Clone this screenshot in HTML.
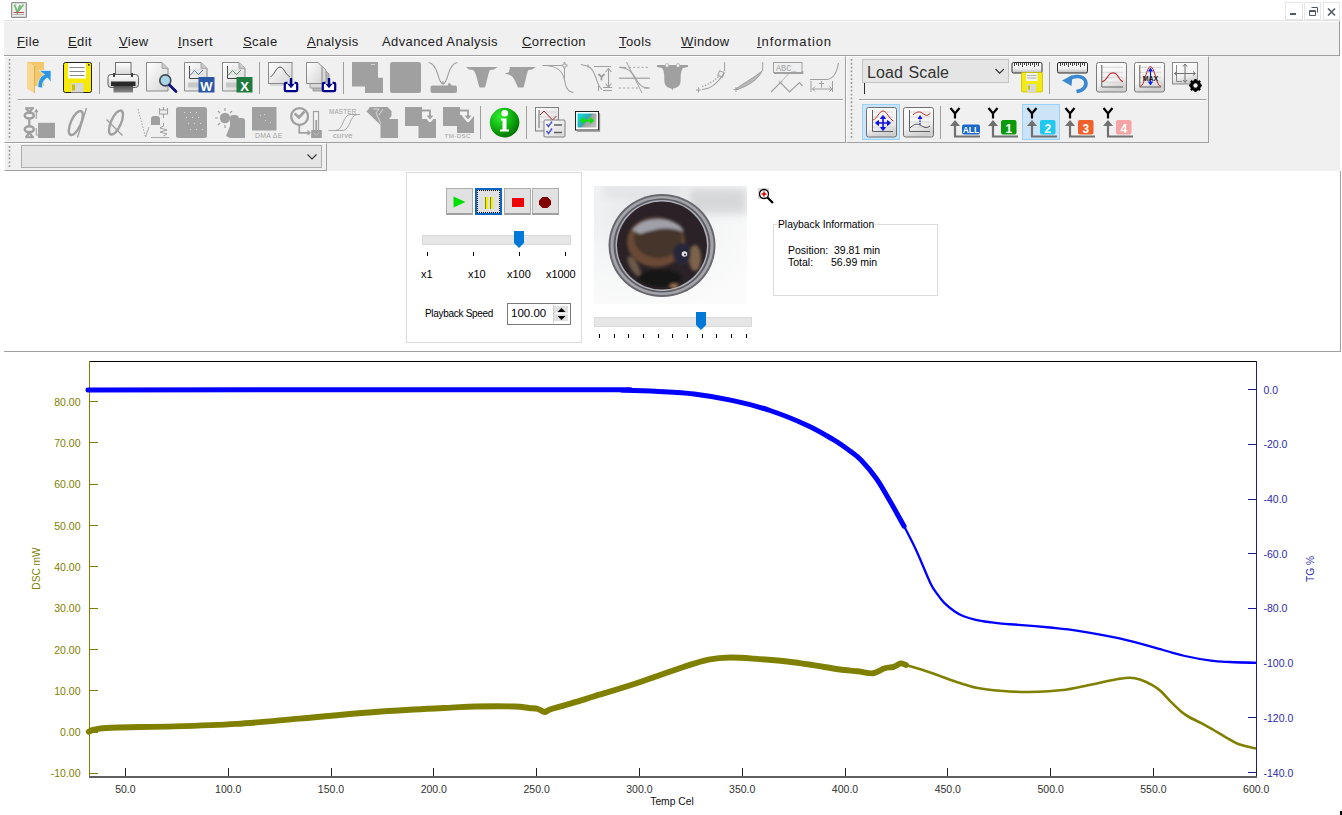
<!DOCTYPE html>
<html><head><meta charset="utf-8">
<style>
*{margin:0;padding:0;box-sizing:border-box}
html,body{width:1342px;height:815px;overflow:hidden;background:#fff;font-family:"Liberation Sans",sans-serif;color:#000}
.a{position:absolute}
.menu{position:absolute;top:34px;font-size:13px;letter-spacing:0.4px;color:#222;line-height:15px;white-space:nowrap}
.menu u{text-decoration:underline;text-underline-offset:1px}
svg{position:absolute;overflow:visible}
.t{position:absolute;white-space:nowrap;line-height:1}
</style></head><body>
<div class="a" style="left:0;top:0;width:1342px;height:815px">

<!-- title bar icon -->
<div class="a" style="left:11px;top:2px;width:16px;height:16px;border:1px solid #909090;background:#eef2ee;border-radius:1px;box-shadow:inset 0 0 0 1px #d8d8d8"></div>
<svg style="left:11px;top:2px" width="16" height="16"><path d="M3.5 2.5 L6.3 10.5 L9 3 M6.3 10.5 L12.5 2.5" stroke="#78b878" stroke-width="1.8" fill="none"/><path d="M2.5 10.5 H13" stroke="#c05050" stroke-width="1"/><path d="M2.5 12.5 H13" stroke="#a0a0a0" stroke-width="0.8"/></svg>
<!-- window buttons -->
<div class="a" style="left:1285px;top:2px;width:18px;height:18px;border:1px solid #e6e6e6"></div>
<div class="a" style="left:1304px;top:2px;width:17px;height:18px;border:1px solid #e6e6e6"></div>
<div class="a" style="left:1323px;top:2px;width:17px;height:18px;border:1px solid #e6e6e6"></div>
<div class="a" style="left:1290px;top:13px;width:6px;height:2px;background:#505a64"></div>
<svg style="left:1309px;top:7px" width="9" height="9"><path d="M2.5 0.5 H8.5 V5.5 M0.5 3.5 H6.5 V8.5 H0.5 Z M0.5 4.5 H6.5" stroke="#505a64" stroke-width="1" fill="none"/></svg>
<svg style="left:1327px;top:8px" width="9" height="8"><path d="M1 0.5 L8 7.5 M8 0.5 L1 7.5" stroke="#505a64" stroke-width="1.6"/></svg>

<!-- menu bar -->
<div class="a" style="left:4px;top:20px;width:1336px;height:36px;background:#f0f0f0;border-top:1px solid #e2e2e2"></div>
<div class="a" style="left:4px;top:21px;width:1336px;height:1px;background:#fafafa"></div>
<div class="a" style="left:4px;top:55px;width:1336px;height:1px;background:#a0a0a0"></div>
<div class="a" style="left:1339px;top:21px;width:1px;height:35px;background:#9a9a9a"></div>
<div class="menu" style="left:17px"><u>F</u>ile</div>
<div class="menu" style="left:68px"><u>E</u>dit</div>
<div class="menu" style="left:119px"><u>V</u>iew</div>
<div class="menu" style="left:178px"><u>I</u>nsert</div>
<div class="menu" style="left:243px"><u>S</u>cale</div>
<div class="menu" style="left:307px"><u>A</u>nalysis</div>
<div class="menu" style="left:382px">Advanced Analysis</div>
<div class="menu" style="left:522px"><u>C</u>orrection</div>
<div class="menu" style="left:619px"><u>T</u>ools</div>
<div class="menu" style="left:681px"><u>W</u>indow</div>
<div class="menu" style="left:757px;letter-spacing:0.9px"><u>I</u>nformation</div>

<!-- toolbar area -->
<div class="a" style="left:4px;top:56px;width:1336px;height:115px;background:#f0f0f0"></div>
<!-- toolbar 1 -->
<div class="a" style="left:4px;top:56px;width:842px;height:87px;border-left:1px solid #fff;border-top:1px solid #fff;border-bottom:1px solid #a0a0a0;border-right:1px solid #a0a0a0"></div>
<div class="a" style="left:18px;top:99px;width:825px;height:1px;background:#a0a0a0"></div>
<div class="a" style="left:18px;top:100px;width:825px;height:1px;background:#fff"></div>
<!-- toolbar 2 -->
<div class="a" style="left:846px;top:56px;width:363px;height:87px;border-left:1px solid #fff;border-top:1px solid #fff;border-bottom:1px solid #a0a0a0;border-right:1px solid #a0a0a0"></div>
<div class="a" style="left:859px;top:99px;width:347px;height:1px;background:#a0a0a0"></div>
<div class="a" style="left:859px;top:100px;width:347px;height:1px;background:#fff"></div>
<!-- toolbar bottom line full -->
<!-- combo toolbar -->
<div class="a" style="left:4px;top:143px;width:323px;height:28px;border-left:1px solid #fff;border-top:1px solid #fff;border-bottom:1px solid #a0a0a0;border-right:1px solid #a0a0a0"></div>
<div class="a" style="left:21px;top:145px;width:301px;height:23px;background:#e5e5e5;border:1px solid #adadad"></div>
<svg style="left:307px;top:153.5px" width="10" height="6"><path d="M0.5 0.5 L5 5 L9.5 0.5" stroke="#333" stroke-width="1.1" fill="none"/></svg>

<!-- grips -->
<div id="grips"></div>

<!-- playback panel -->
<div class="a" style="left:4px;top:171px;width:1337px;height:181px;background:#fff;border-right:1px solid #a0a0a0;border-bottom:1px solid #a0a0a0"></div>

<!-- playback group -->
<div class="a" style="left:406px;top:172px;width:176px;height:171px;border:1px solid #dcdcdc"></div>
<!-- buttons -->
<div class="a" style="left:446px;top:188px;width:27px;height:27px;background:#e1e1e1;border:1px solid #adadad;border-bottom:2px solid #a0a0a0"></div>
<svg style="left:453px;top:196px" width="13" height="12"><path d="M0.5 0.5 L12.5 6 L0.5 11.5 Z" fill="#00e000"/></svg>
<div class="a" style="left:475px;top:188px;width:27px;height:27px;background:#e1e1e1;border:2px solid #0a64c0"></div>
<div class="a" style="left:477px;top:190px;width:23px;height:23px;border:1px dotted #101010"></div>
<div class="a" style="left:485px;top:197px;width:3px;height:12px;background:#f2f200;border-left:1px solid #8a8a00"></div>
<div class="a" style="left:490px;top:197px;width:3px;height:12px;background:#f2f200;border-left:1px solid #8a8a00"></div>
<div class="a" style="left:504px;top:188px;width:27px;height:27px;background:#e1e1e1;border:1px solid #adadad;border-bottom:2px solid #a0a0a0"></div>
<div class="a" style="left:512px;top:198px;width:12px;height:9px;background:#f00000"></div>
<div class="a" style="left:532px;top:188px;width:27px;height:27px;background:#e1e1e1;border:1px solid #adadad;border-bottom:2px solid #a0a0a0"></div>
<svg style="left:539px;top:197px" width="12" height="11"><path d="M3.5 0 H8.5 L12 3.5 V7.5 L8.5 11 H3.5 L0 7.5 V3.5 Z" fill="#800000"/></svg>
<!-- slider 1 -->
<div class="a" style="left:422px;top:235px;width:149px;height:10px;background:#e6e6e6;border:1px solid #dadada"></div>
<svg style="left:514px;top:231px" width="11" height="17"><path d="M0 0 H10 V12 L5 17 L0 12 Z" fill="#0078d7"/></svg>
<div class="a" style="left:427px;top:252px;width:1px;height:4px;background:#000"></div>
<div class="a" style="left:473px;top:252px;width:1px;height:4px;background:#000"></div>
<div class="a" style="left:519px;top:252px;width:1px;height:4px;background:#000"></div>
<div class="a" style="left:565px;top:252px;width:1px;height:4px;background:#000"></div>
<div class="t" style="left:421px;top:269px;font-size:11px;color:#000">x1</div>
<div class="t" style="left:468px;top:269px;font-size:11px;color:#000">x10</div>
<div class="t" style="left:507px;top:269px;font-size:11px;color:#000">x100</div>
<div class="t" style="left:546px;top:269px;font-size:11px;color:#000;letter-spacing:-0.1px">x1000</div>
<div class="t" style="left:425px;top:309px;font-size:10px;color:#000;letter-spacing:-0.3px">Playback Speed</div>
<!-- spin -->
<div class="a" style="left:507px;top:303px;width:64px;height:22px;background:#fff;border:1px solid #7a7a7a"></div>
<div class="t" style="left:511px;top:308px;font-size:11.5px;color:#000">100.00</div>
<div class="a" style="left:553px;top:305px;width:1px;height:18px;background:#d0d0d0"></div>
<div class="a" style="left:554px;top:306px;width:14px;height:7px;background:#e1e1e1"></div>
<div class="a" style="left:554px;top:314px;width:14px;height:7px;background:#e1e1e1"></div>
<svg style="left:557px;top:307px" width="9" height="14"><path d="M0.5 5 L4.5 1 L8.5 5 Z M0.5 9 L4.5 13 L8.5 9 Z" fill="#000"/></svg>

<!-- video image -->
<svg style="left:594px;top:186px;overflow:hidden" width="153" height="118">
<defs>
<filter id="bl" x="-0.2" y="-0.2" width="1.4" height="1.4"><feGaussianBlur stdDeviation="1.6"/></filter>
<filter id="bl2" x="-0.2" y="-0.2" width="1.4" height="1.4"><feGaussianBlur stdDeviation="0.7"/></filter>
<filter id="bl3" x="-0.5" y="-0.5" width="2" height="2"><feGaussianBlur stdDeviation="4"/></filter>
<radialGradient id="rgb" cx="0.3" cy="0.2" r="0.9"><stop offset="0" stop-color="#e6e8ea"/><stop offset="0.5" stop-color="#f4f5f6"/><stop offset="1" stop-color="#fbfbfb"/></radialGradient>
</defs>
<rect x="0" y="0" width="153" height="118" fill="url(#rgb)"/>
<rect x="95" y="2" width="58" height="26" fill="#cfd0d2" filter="url(#bl3)" opacity="0.8"/>
<rect x="10" y="0" width="80" height="12" fill="#dfe0e2" filter="url(#bl3)" opacity="0.7"/>
<g filter="url(#bl2)">
<ellipse cx="68" cy="59.5" rx="53.5" ry="51.5" fill="#68686e"/>
<ellipse cx="68" cy="59.5" rx="51.5" ry="49.5" fill="#a4a4aa"/>
<ellipse cx="68" cy="59.5" rx="48.5" ry="47" fill="#5a5a62"/>
<ellipse cx="68" cy="59.5" rx="46.5" ry="45.5" fill="#b0b0ba"/>
<ellipse cx="68" cy="59.5" rx="45" ry="44" fill="#2c2428"/>
</g>
<g filter="url(#bl)">
<ellipse cx="62" cy="56" rx="29" ry="25" fill="#6a4a34"/>
<ellipse cx="64" cy="52" rx="24" ry="20" fill="#44342c"/>
<path d="M38 44 Q50 30 74 34 Q88 38 90 46 Q72 38 46 48 Z" fill="#a0a0a8"/>
<ellipse cx="101" cy="72" rx="6" ry="13" fill="#9a7858" opacity="0.75"/>
<ellipse cx="40" cy="80" rx="4" ry="11" fill="#9a8060" opacity="0.6" transform="rotate(-30 40 80)"/>
<ellipse cx="66" cy="92" rx="22" ry="9" fill="#141216"/>
<ellipse cx="80" cy="100" rx="4" ry="2.5" fill="#c09060" opacity="0.7"/>
<ellipse cx="88" cy="68" rx="9" ry="11" fill="#28283a"/>
</g>
<circle cx="90.5" cy="68" r="2.8" fill="#e0e0e0" filter="url(#bl2)"/>
<circle cx="91" cy="68.5" r="1.1" fill="#404040"/>
</svg>
<!-- zoom icon -->
<div class="a" style="left:758px;top:188px;width:11px;height:11px;background:#d8d8d8"></div>
<svg style="left:758px;top:188px" width="16" height="16"><circle cx="6" cy="6" r="4.5" fill="#fff" stroke="#000" stroke-width="1.3"/><path d="M3.5 6 H8.5 M6 3.5 V8.5" stroke="#e00000" stroke-width="1.6"/><path d="M9.5 9.5 L15 15" stroke="#000" stroke-width="2.2"/></svg>
<!-- slider 2 -->
<div class="a" style="left:594px;top:317px;width:158px;height:10px;background:#e6e6e6;border:1px solid #dadada"></div>
<svg style="left:696px;top:312px" width="11" height="18"><path d="M0 0 H10 V13 L5 18 L0 13 Z" fill="#0078d7"/></svg>
<div class="a" style="left:599px;top:334px;width:1px;height:4px;background:#000"></div>
<div class="a" style="left:614px;top:334px;width:1px;height:4px;background:#000"></div>
<div class="a" style="left:628px;top:334px;width:1px;height:4px;background:#000"></div>
<div class="a" style="left:643px;top:334px;width:1px;height:4px;background:#000"></div>
<div class="a" style="left:658px;top:334px;width:1px;height:4px;background:#000"></div>
<div class="a" style="left:672px;top:334px;width:1px;height:4px;background:#000"></div>
<div class="a" style="left:687px;top:334px;width:1px;height:4px;background:#000"></div>
<div class="a" style="left:702px;top:334px;width:1px;height:4px;background:#000"></div>
<div class="a" style="left:716px;top:334px;width:1px;height:4px;background:#000"></div>
<div class="a" style="left:731px;top:334px;width:1px;height:4px;background:#000"></div>
<div class="a" style="left:746px;top:334px;width:1px;height:4px;background:#000"></div>
<!-- info group -->
<div class="a" style="left:773px;top:224px;width:165px;height:72px;border:1px solid #dcdcdc"></div>
<div class="t" style="left:777px;top:220px;font-size:10.3px;color:#000;background:#fff;padding:0 1px">Playback Information</div>
<div class="t" style="left:788px;top:245px;font-size:10.5px;color:#000">Position:</div>
<div class="t" style="left:834px;top:245px;font-size:10.5px;color:#000">39.81 min</div>
<div class="t" style="left:788px;top:256.5px;font-size:10.5px;color:#000">Total:</div>
<div class="t" style="left:831px;top:256.5px;font-size:10.5px;color:#000">56.99 min</div>

<svg style="left:0;top:0" width="1342" height="172">
<defs>
<linearGradient id="gw" x1="0" y1="0" x2="1" y2="1"><stop offset="0" stop-color="#ffffff"/><stop offset="1" stop-color="#d6d6d6"/></linearGradient>
<linearGradient id="gv" x1="0" y1="0" x2="0" y2="1"><stop offset="0" stop-color="#ffffff"/><stop offset="1" stop-color="#d0d0d0"/></linearGradient>
<linearGradient id="gdark" x1="0" y1="0" x2="0" y2="1"><stop offset="0" stop-color="#505050"/><stop offset="1" stop-color="#8a8a8a"/></linearGradient>
</defs>
<!-- grips -->
<path d="M9.5 59 V140" stroke="#9a9a9a" stroke-width="1.6" stroke-dasharray="1.8 2.05"/>
<path d="M851.5 59 V140" stroke="#9a9a9a" stroke-width="1.6" stroke-dasharray="1.8 2.05"/>
<path d="M9.5 146 V168" stroke="#9a9a9a" stroke-width="1.6" stroke-dasharray="1.8 2.05"/>
<!-- separators row1 -->
<path d="M99.5 62 V94 M259.5 62 V94 M343.5 62 V94 M1049.5 62 V94" stroke="#a0a0a0" stroke-width="1"/>
<!-- row2 separators -->
<path d="M480.5 106 V139 M526.5 106 V139 M940.5 106 V139" stroke="#a0a0a0" stroke-width="1"/>

<!-- folder -->
<path d="M27 62 H44 V86 H27 Z" fill="#f2c86a"/>
<path d="M27 62 L34.5 66 V93 L27 89 Z" fill="#f8d890"/>
<path d="M34.5 66 V93" stroke="#d8a850" stroke-width="0.8"/>
<path d="M38 87.5 C37.5 81 40 76.5 44.5 74.5 L39 70.5 H51 V82 L47.5 78 C43.5 80 42 83 42.5 88 Z" fill="#2e96e2" stroke="#eaf6ff" stroke-width="0.7"/>
<!-- save -->
<rect x="63.5" y="62.5" width="28" height="30" rx="2" fill="#f6ea00" stroke="#202020" stroke-width="1"/>
<rect x="68" y="63" width="18" height="15.5" fill="#ffffff"/>
<path d="M69.5 67.5 H84.5 M69.5 71.5 H84.5 M69.5 75.5 H84.5" stroke="#7a7a7a" stroke-width="0.9"/>
<rect x="71" y="83" width="12.5" height="9.5" fill="#d8d8d8"/>
<rect x="72" y="84.5" width="3" height="6" fill="#c8c000"/>
<rect x="88" y="64" width="1.6" height="1.6" fill="#202020"/>
<!-- printer -->
<rect x="115.5" y="62.5" width="15.5" height="14" fill="url(#gv)" stroke="#707070" stroke-width="1"/>
<rect x="108" y="74.5" width="30.5" height="13" rx="3" fill="url(#gv)" stroke="#606060" stroke-width="1"/>
<rect x="111" y="81.5" width="24.5" height="4.5" fill="#2a2a2a"/>
<rect x="113.5" y="86" width="19.5" height="6.5" fill="url(#gdark)"/>
<path d="M114 73 V77 M132 73 V77" stroke="#404040" stroke-width="2"/>
<!-- page + magnifier -->
<path d="M146.5 62.5 H162 L168 68.5 V91 H146.5 Z" fill="url(#gw)" stroke="#8a8a8a" stroke-width="1"/>
<path d="M162 62.5 V68.5 H168" fill="#c8c8c8" stroke="#9a9a9a" stroke-width="0.8"/>
<circle cx="165.3" cy="80.4" r="5.5" fill="#a8d4e8" stroke="#404850" stroke-width="1.6"/>
<path d="M169.5 85 L176 91.5" stroke="#10107a" stroke-width="2.8" stroke-linecap="round"/>
<!-- word -->
<path d="M184.5 62.5 H201 L207 68.5 V91 H184.5 Z" fill="url(#gw)" stroke="#8a8a8a" stroke-width="1"/>
<path d="M201 62.5 V68.5 H207" fill="#c8c8c8" stroke="#9a9a9a" stroke-width="0.8"/>
<path d="M189.5 66 V78.5 H203" stroke="#303030" stroke-width="0.9" fill="none"/>
<path d="M189.5 70 H203 M189.5 74 H203" stroke="#d0d0d0" stroke-width="0.7"/>
<path d="M190 75.5 L194.5 70.5 L198.5 74.5 L203 70" stroke="#5a78a8" stroke-width="1" fill="none"/>
<rect x="188" y="82.5" width="11" height="5" fill="#c8c8c8"/>
<rect x="198.5" y="77" width="16" height="15.5" fill="#2b58a6"/>
<text x="206.5" y="90.5" text-anchor="middle" font-size="13" font-weight="bold" fill="#fff" font-family="Liberation Sans">W</text>
<!-- excel -->
<path d="M222.5 62.5 H239 L245 68.5 V91 H222.5 Z" fill="url(#gw)" stroke="#8a8a8a" stroke-width="1"/>
<path d="M239 62.5 V68.5 H245" fill="#c8c8c8" stroke="#9a9a9a" stroke-width="0.8"/>
<path d="M227.5 66 V78.5 H241" stroke="#303030" stroke-width="0.9" fill="none"/>
<path d="M227.5 70 H241 M227.5 74 H241" stroke="#d0d0d0" stroke-width="0.7"/>
<path d="M228 75.5 L232.5 70.5 L236.5 74.5 L241 70" stroke="#5a8a6a" stroke-width="1" fill="none"/>
<rect x="226" y="82.5" width="11" height="5" fill="#c8c8c8"/>
<rect x="236.5" y="77" width="16" height="15.5" fill="#1f7a3e"/>
<text x="244.5" y="90.5" text-anchor="middle" font-size="13" font-weight="bold" fill="#fff" font-family="Liberation Sans">X</text>
<!-- curve import -->
<rect x="268.5" y="62.5" width="23.5" height="21" fill="url(#gw)" stroke="#8a8a8a" stroke-width="1"/>
<path d="M292.5 64 V85 H270" stroke="#c0c0c0" stroke-width="1.2" fill="none"/>
<path d="M270.5 76.5 C274 76 276 67 280 67 C284 67 286 76 290 76.5" stroke="#404040" stroke-width="0.9" fill="none"/>
<path d="M287.5 82.8 H286 Q284.8 82.8 284.8 84 V90 Q284.8 91.2 286 91.2 H296 Q297.2 91.2 297.2 90 V84 Q297.2 82.8 296 82.8 H294.5" stroke="#00008a" stroke-width="2.2" fill="#fff"/>
<path d="M291 78 V85" stroke="#00008a" stroke-width="2.4"/><path d="M287.3 83.8 H294.7 L291 88.3 Z" fill="#00008a"/>
<!-- multi page import -->
<path d="M313 70 H325 L329 74 V91 H313 Z" fill="#b8b8b8" stroke="#909090" stroke-width="0.8"/>
<path d="M310 66 H322 L326 70 V88 H310 Z" fill="#d8d8d8" stroke="#909090" stroke-width="0.8"/>
<path d="M306.5 62.5 H318 L322 66.5 V83.5 H306.5 Z" fill="url(#gw)" stroke="#8a8a8a" stroke-width="1"/>
<path d="M325.5 82.8 H324 Q322.8 82.8 322.8 84 V90 Q322.8 91.2 324 91.2 H334 Q335.2 91.2 335.2 90 V84 Q335.2 82.8 334 82.8 H332.5" stroke="#00008a" stroke-width="2.2" fill="#fff"/>
<path d="M329 78 V85" stroke="#00008a" stroke-width="2.4"/><path d="M325.3 83.8 H332.7 L329 88.3 Z" fill="#00008a"/>

<!-- gray L -->
<path d="M352 62 H378 V77.7 H383 V93 H365 V86.6 H352 Z" fill="#a0a0a0"/>
<path d="M371 64.5 H375" stroke="#e0e0e0" stroke-width="0.8"/>
<!-- gray square -->
<rect x="390" y="62" width="31" height="31" rx="2.5" fill="#a0a0a0"/>
<!-- V base -->
<path d="M428.5 62.5 C433 63 436 68 438 75 C440 82 441.5 84 443 84 C444.5 84 446 82 448 75 C450 68 453 63 457.5 62.5" stroke="#a0a0a0" stroke-width="1.1" fill="none"/>
<path d="M443 81 V85 M441 83 H445" stroke="#a0a0a0" stroke-width="0.9"/>
<path d="M432.5 85.5 H447.5 L449 82.5 L452 85.5 H455 Q457 85.5 457 87.5 V91 Q457 93 455 93 H432.5 Q430.5 93 430.5 91 V87.5 Q430.5 85.5 432.5 85.5 Z" fill="#a0a0a0"/>
<!-- filled V -->
<path d="M466 67 H497.5 L494 69.5 L490 70 C488 73 487.5 80 485 87.5 H479.5 C477 80 476.5 73 473 70 L469 69.5 Z" fill="#a0a0a0"/>
<!-- skewed V -->
<path d="M510 67 H536 L532 69.5 L528.5 70 C526.5 73 526 80 523.5 87.5 H518 C515.5 82 514 77 510 75 L504.5 73.6 L509 72.2 Z" fill="#a0a0a0"/>
<!-- curve cross -->
<path d="M542.5 65.5 H561.5" stroke="#a0a0a0" stroke-width="1"/>
<path d="M548 65.8 C557 66.5 563 72 564.5 80 C565.5 86 567 92 573.5 92.5" stroke="#a0a0a0" stroke-width="1.1" fill="none"/>
<path d="M564.5 62 V80" stroke="#a0a0a0" stroke-width="1"/>
<path d="M561.5 65.5 H567.5 M564.5 62.5 V68.5" stroke="#a0a0a0" stroke-width="2.2"/>
<path d="M562.5 65.5 H566.5 M564.5 63.5 V67.5" stroke="#f0f0f0" stroke-width="0.7"/>
<!-- Y step -->
<path d="M581 64.5 L588 66.3 C592 68 594 72 596 78 C597.5 83 598.5 87 602 89.5" stroke="#a0a0a0" stroke-width="1.1" fill="none"/>
<path d="M594 66.5 H611 M603 87.5 H612 M603 90.5 H612 M588 64.5 V67.5 M598.5 86 V91" stroke="#a0a0a0" stroke-width="1"/>
<path d="M608.5 69 V86.5" stroke="#a0a0a0" stroke-width="1.1"/>
<path d="M605.5 72 L608.5 68.5 L611.5 72 M605.5 83.5 L608.5 87 L611.5 83.5" stroke="#a0a0a0" stroke-width="1.1" fill="none"/>
<path d="M598.5 74 L601.5 77 L604.5 74 M601.5 77 V80.5" stroke="#a0a0a0" stroke-width="1.8" fill="none"/>
<!-- crossing lines -->
<path d="M619 67.4 H626" stroke="#a0a0a0" stroke-width="1"/>
<path d="M629 67.4 H650" stroke="#a0a0a0" stroke-width="1" stroke-dasharray="2 2.2"/>
<path d="M619 78.2 H650" stroke="#a0a0a0" stroke-width="1.2"/>
<path d="M619 88 H640" stroke="#a0a0a0" stroke-width="1" stroke-dasharray="2 2.2"/>
<path d="M644 88 H650" stroke="#a0a0a0" stroke-width="1.2"/>
<path d="M619.5 67.4 C628 67.5 632 72 636 79 C640 86 643 88 648 88" stroke="#a0a0a0" stroke-width="1.1" fill="none"/>
<path d="M626.5 62 L642 93" stroke="#a0a0a0" stroke-width="1"/>
<!-- U dots -->
<path d="M657 65 H688 V67 L683 68 C680 72 681 78 680.5 82 C680 86 677 88 673 88.5 L672.5 91 L671.5 88.5 C667.5 88 665 86 664.5 82 C664 78 665 72 662 68 L657 67 Z" fill="#a0a0a0"/>
<circle cx="667" cy="65.5" r="1.8" fill="#f8f8f8" stroke="#a0a0a0" stroke-width="0.8"/>
<circle cx="678" cy="65.5" r="1.8" fill="#f8f8f8" stroke="#a0a0a0" stroke-width="0.8"/>
<!-- dotted curve -->
<path d="M724.6 62 V71" stroke="#a0a0a0" stroke-width="1"/>
<path d="M702 89.5 C711 89 718 83 724 73" stroke="#a0a0a0" stroke-width="1.1" fill="none"/>
<path d="M702 86.5 C709 84.5 715 80 720 75" stroke="#a0a0a0" stroke-width="1.3" fill="none" stroke-dasharray="1.3 1.7"/>
<path d="M696 90 H701 M698.5 87.5 V92.5" stroke="#a0a0a0" stroke-width="1"/>
<rect x="718.5" y="71.5" width="5" height="5" fill="none" stroke="#a0a0a0" stroke-width="1" transform="rotate(20 721 74)"/>
<!-- double curve -->
<path d="M762.7 62 V71" stroke="#a0a0a0" stroke-width="1"/>
<path d="M735 89.5 C745 82 754 78 762 71 C758 80 748 86 737 89.5 Z" fill="#b8b8b8" stroke="#a0a0a0" stroke-width="1"/>
<path d="M733.5 89.5 H738.5 M736 87 V92" stroke="#a0a0a0" stroke-width="1"/>
<!-- ABC zigzag -->
<rect x="773.5" y="62.5" width="28.5" height="10" fill="#f0f0f0" stroke="#a0a0a0" stroke-width="1"/>
<path d="M774 73.3 H802.5 V71" stroke="#a0a0a0" stroke-width="1.5" fill="none"/>
<text x="776" y="71" font-size="8.5" fill="#a0a0a0" font-family="Liberation Mono">ABC_</text>
<path d="M789 73.5 L779.5 83" stroke="#a0a0a0" stroke-width="0.8"/>
<path d="M771 92 L780.5 82.5 L789.5 92 L799.5 82.5 L802.5 86" stroke="#a0a0a0" stroke-width="1.2" fill="none"/>
<path d="M778.5 81 L782.5 84.5 M782.5 81 L778.5 84.5" stroke="#a0a0a0" stroke-width="0.8"/>
<!-- curve t -->
<path d="M810 79.5 H827 C833 79 837 72 838.5 63" stroke="#a0a0a0" stroke-width="1.1" fill="none"/>
<path d="M811 81 V92 M832.5 81 V92" stroke="#a0a0a0" stroke-width="1"/>
<path d="M812 89 H832 M815 86.5 L812.5 89 L815 91.5 M829.5 86.5 L832 89 L829.5 91.5" stroke="#a0a0a0" stroke-width="1" fill="none"/>
<path d="M821.5 81 V87.5 M819 83.5 H824" stroke="#a0a0a0" stroke-width="1"/>
</svg>

<svg style="left:0;top:0" width="1342" height="172">
<defs>
<radialGradient id="ginfo" cx="0.35" cy="0.3" r="0.75"><stop offset="0" stop-color="#30f030"/><stop offset="0.55" stop-color="#10b010"/><stop offset="1" stop-color="#007000"/></radialGradient>
<linearGradient id="gscr" x1="0" y1="0.2" x2="1" y2="0.8"><stop offset="0" stop-color="#10d8e0"/><stop offset="0.45" stop-color="#30a8b0"/><stop offset="0.55" stop-color="#a0a0a0"/><stop offset="1" stop-color="#c0c0c0"/></linearGradient>
<linearGradient id="gw2" x1="0" y1="0" x2="1" y2="1"><stop offset="0" stop-color="#ffffff"/><stop offset="1" stop-color="#d6d6d6"/></linearGradient>
</defs>
<!-- icon1 DNA + square -->
<g fill="none" stroke="#a0a0a0">
<ellipse cx="29.3" cy="115.5" rx="4.5" ry="3" stroke-width="2.6"/>
<ellipse cx="29.3" cy="129.2" rx="4.5" ry="3" stroke-width="2.6"/>
<path d="M29.3 118.5 V126.5" stroke-width="2.2"/>
<path d="M26 108 L29.3 112.5 L32.8 108 M29.3 112 V113" stroke-width="2.4"/>
<path d="M26 137.5 L29.3 132.5 L32.8 137.5" stroke-width="2.4"/>
<path d="M25.3 108.2 H34" stroke-width="2"/>
<path d="M25.3 137.2 H34" stroke-width="2"/>
<path d="M36.3 119 V111" stroke-width="1.1"/>
<path d="M36.3 128 V135 H38" stroke-width="1.1"/>
</g>
<path d="M34 112.3 L36.3 108.8 L38.6 112.3 Z" fill="#a0a0a0"/>
<rect x="38" y="122.8" width="17" height="15.2" fill="#a0a0a0"/>
<!-- icon2 ellipse -->
<ellipse cx="75.8" cy="123" rx="5" ry="13" transform="rotate(24 75.8 123)" fill="none" stroke="#a0a0a0" stroke-width="2.4"/>
<path d="M86.5 108 L77.5 137.5" stroke="#a0a0a0" stroke-width="1.4"/>
<!-- icon3 -->
<ellipse cx="116" cy="122.5" rx="5" ry="13" transform="rotate(24 116 122.5)" fill="none" stroke="#a0a0a0" stroke-width="2.4"/>
<path d="M106.5 119.5 L122.5 135.5" stroke="#a0a0a0" stroke-width="1.4"/>
<!-- icon4 -->
<path d="M138 109 L145.5 137" stroke="#a0a0a0" stroke-width="1" stroke-dasharray="1.5 1.5"/>
<path d="M145.5 137 L149 127" stroke="#a0a0a0" stroke-width="0.9"/>
<path d="M151 119 Q151 116 154 116 H157 Q160 116 160 119 V125 H151 Z" fill="#a0a0a0"/>
<path d="M159.5 110 H167.5 V114 H159.5 Z M159.5 108 V110 M167.5 108 V110 M163.5 107 V110 M163.5 114 V118" stroke="#a0a0a0" stroke-width="1.1" fill="none"/>
<path d="M163.5 123 V126 L160 128 L167 130 L160 132 L167 134 L163.5 136" stroke="#a0a0a0" stroke-width="1" fill="none"/>
<path d="M151 137.5 H169" stroke="#a0a0a0" stroke-width="0.9"/>
<!-- dots square -->
<rect x="176" y="107" width="31" height="31" rx="2.5" fill="#a0a0a0"/>
<g fill="#dcdcdc">
<rect x="184" y="112" width="1" height="1"/><rect x="190" y="112" width="1" height="1"/><rect x="196" y="112" width="1" height="1"/>
<rect x="186" y="117" width="1" height="1"/><rect x="192" y="117" width="1" height="1"/><rect x="198" y="117" width="1" height="1"/>
<rect x="188" y="123" width="1" height="1"/><rect x="194" y="123" width="1" height="1"/><rect x="200" y="123" width="1" height="1"/>
<rect x="190" y="129" width="1" height="1"/><rect x="196" y="129" width="1" height="1"/><rect x="202" y="129" width="1" height="1"/>
</g>
<!-- sun -->
<circle cx="225" cy="118" r="5.2" fill="#a0a0a0"/>
<path d="M225 108 V111 M225 125 V128 M215 118 H218 M218 111 L220 113 M232 111 L230 113 M218 125 L220 123" stroke="#a0a0a0" stroke-width="1.2"/>
<path d="M226 136 L230 126 V118 Q230 115 233 115 H236 Q238 115 239 118 H242 Q245 118 245 121 V138 H230 Z" fill="#a0a0a0"/>
<!-- DMA -->
<rect x="252" y="107" width="24.5" height="23.5" fill="#a0a0a0"/>
<g fill="#d8d8d8"><rect x="260" y="115" width="1" height="1"/><rect x="264" y="114" width="1" height="1"/><rect x="265" y="120" width="1" height="1"/><rect x="270" y="122" width="1" height="1"/></g>
<text x="255" y="137.5" font-size="6.8" fill="#a0a0a0" font-family="Liberation Sans" letter-spacing="0.3">DMA ΔE</text>
<!-- clock thermo -->
<circle cx="299.6" cy="116.5" r="8.4" fill="none" stroke="#a0a0a0" stroke-width="2.3"/>
<path d="M294.5 113.5 L299 117.5 L304.5 111.5" stroke="#a0a0a0" stroke-width="2.6" fill="none"/>
<path d="M299.3 125 V132.8 H309" stroke="#a0a0a0" stroke-width="1.7" fill="none"/>
<path d="M307.5 129.8 L311 132.8 L307.5 135.8 Z" fill="#a0a0a0"/>
<path d="M297 124.5 L299.3 127 L301.6 124.5 Z" fill="#a0a0a0"/>
<rect x="313.5" y="111.5" width="5" height="20" fill="#f4f4f4" stroke="#a0a0a0" stroke-width="1.2"/>
<rect x="315.3" y="120" width="1.8" height="11" fill="#a0a0a0"/>
<rect x="311.2" y="130" width="10.6" height="8" fill="#a0a0a0"/>
<path d="M313.5 132.5 L316.3 135.5 L319 132.5" stroke="#c8c8c8" stroke-width="0.8" fill="none"/>
<!-- master curve -->
<text x="329" y="113.5" font-size="6.3" fill="#a0a0a0" font-family="Liberation Sans" letter-spacing="0.2">MASTER</text>
<path d="M328.5 130.5 H336 C343 130 343 115 350 114.5 H360" stroke="#a0a0a0" stroke-width="0.9" fill="none"/>
<path d="M336 130.5 H343 C350 130 350 115 357 114.5" stroke="#a0a0a0" stroke-width="0.9" fill="none"/>
<text x="333" y="137.5" font-size="7.5" fill="#a0a0a0" font-family="Liberation Sans" letter-spacing="0.3">curve</text>
<!-- diamond L -->
<path d="M370 107 H387.5 L391.5 111 V116 L389 119 H398 V138 H380.5 V125 L366.5 111.5 Z" fill="#a0a0a0"/>
<path d="M373 109 H379 L376 113 L381 124 M383 109 L379 115" stroke="#e4e4e4" stroke-width="0.8" fill="none"/>
<!-- L arrow -->
<path d="M405 107 H422 V119 H436 V138 H418.5 V126 H405 Z" fill="#a0a0a0"/>
<path d="M422 110.5 H430 V116 M425.5 115 L430 120.5 L434.5 115 Z" stroke="#f4f4f4" stroke-width="3.4" fill="#f4f4f4" stroke-linejoin="round"/>
<path d="M422 110.5 H430 V116" stroke="#a0a0a0" stroke-width="1.8" fill="none"/><path d="M426.5 115.5 H433.5 L430 119.5 Z" fill="#a0a0a0"/>
<!-- TM-DSC -->
<path d="M443 107 H460 V115 H474 V133 H457 V126 H443 Z" fill="#a0a0a0"/>
<path d="M460 110.5 H468 V116 M463.5 115 L468 120.5 L472.5 115 Z" stroke="#f4f4f4" stroke-width="3.4" fill="#f4f4f4" stroke-linejoin="round"/>
<path d="M460 110.5 H468 V116" stroke="#a0a0a0" stroke-width="1.8" fill="none"/><path d="M464.5 115.5 H471.5 L468 119.5 Z" fill="#a0a0a0"/>
<text x="444.5" y="137.8" font-size="6.2" fill="#a0a0a0" font-family="Liberation Sans" letter-spacing="0.4">TM-DSC</text>
<!-- info -->
<circle cx="504.6" cy="122.6" r="14.8" fill="url(#ginfo)"/>
<circle cx="504.8" cy="113.3" r="3.3" fill="#fff"/>
<path d="M501 118.5 H506.5 V129.5 H509 V131.5 H500 V129.5 H502.5 V120.5 H501 Z" fill="#fff"/>
<!-- chart checklist -->
<rect x="535.5" y="107.5" width="23" height="23.5" fill="url(#gw2)" stroke="#808080" stroke-width="1"/>
<path d="M539 110 V128 M539 112 H556 M539 117 H556 M539 122 H556" stroke="#c8c8c8" stroke-width="0.7"/>
<path d="M539 110 V128" stroke="#606060" stroke-width="0.8"/>
<path d="M540 115 L544 111 L552.5 120 L556.5 116" stroke="#b02020" stroke-width="1" fill="none"/>
<rect x="544" y="120" width="21" height="17" rx="1" fill="url(#gw2)" stroke="#808080" stroke-width="1"/>
<path d="M546.5 124 L548.5 126.5 L552 121.5 M546.5 131 L548.5 133.5 L552 128.5" stroke="#5050d0" stroke-width="1.4" fill="none"/>
<path d="M554 125 H562 M554 132.5 H562" stroke="#606060" stroke-width="1.3"/>
<!-- monitor -->
<rect x="575.5" y="111.5" width="23" height="18.5" fill="#fff" stroke="#202020" stroke-width="1"/>
<path d="M599.5 113 V131 H577" stroke="#909090" stroke-width="1.3" fill="none"/>
<rect x="577.5" y="113.5" width="19" height="14" fill="url(#gscr)"/>
<path d="M581 120.5 H593" stroke="#10e010" stroke-width="2.4"/>
<path d="M583.5 117.5 L580 120.5 L583.5 123.5 Z M590.5 117.5 L594 120.5 L590.5 123.5 Z" fill="#10e010" stroke="#10e010" stroke-width="1"/>
</svg>

<!-- Load Scale combo -->
<div class="a" style="left:862px;top:59px;width:147px;height:24px;background:#e5e5e5;border:1px solid #c4c4c4"></div>
<div class="t" style="left:867px;top:64.5px;font-size:16px;color:#333;letter-spacing:0.1px;word-spacing:1px">Load Scale</div>
<div class="a" style="left:864px;top:83px;width:1px;height:11px;background:#303030"></div>
<!-- selected buttons bg -->
<div class="a" style="left:862px;top:104px;width:38px;height:36px;background:#cce4f7;border:1px solid #99d1ff"></div>
<div class="a" style="left:1022px;top:104px;width:38px;height:36px;background:#cce4f7;border:1px solid #99d1ff"></div>
<svg style="left:0;top:0" width="1342" height="172">
<defs>
<linearGradient id="gc" x1="0" y1="0" x2="0.3" y2="1"><stop offset="0" stop-color="#ffffff"/><stop offset="0.7" stop-color="#f0f0f0"/><stop offset="1" stop-color="#d0d0d0"/></linearGradient>
<linearGradient id="gr" x1="0" y1="0" x2="0" y2="1"><stop offset="0" stop-color="#ffffff"/><stop offset="0.6" stop-color="#f0f0f0"/><stop offset="1" stop-color="#b8b8b8"/></linearGradient>
</defs>
<path d="M995.5 69 L999.7 73.2 L1003.9 69" stroke="#303030" stroke-width="1.1" fill="none"/>
<!-- ruler save -->
<rect x="1012" y="62.5" width="30" height="10.5" rx="1.5" fill="url(#gr)" stroke="#303030" stroke-width="1"/>
<path d="M1014.5 63 V66 M1016.5 63 V65 M1018.5 63 V66 M1020.5 63 V65 M1022.5 63 V67 M1024.5 63 V65 M1026.5 63 V66 M1028.5 63 V65 M1030.5 63 V66 M1032.5 63 V65 M1034.5 63 V67 M1036.5 63 V65 M1038.5 63 V66" stroke="#303030" stroke-width="0.9"/>
<rect x="1021.5" y="72.5" width="21" height="19.5" rx="1" fill="#f2ea10" stroke="#c8c000" stroke-width="0.8"/>
<rect x="1026" y="73" width="11.5" height="8" fill="#f4f4f4"/>
<path d="M1027 75.5 H1036.5 M1027 78 H1036.5" stroke="#909090" stroke-width="0.7"/>
<rect x="1027" y="84" width="9" height="8" fill="#d8d8d8"/>
<rect x="1028" y="85.5" width="2" height="4" fill="#c8c000"/>
<!-- ruler undo -->
<rect x="1057.5" y="62.5" width="30" height="10.5" rx="1.5" fill="url(#gr)" stroke="#303030" stroke-width="1"/>
<path d="M1060.5 63 V66 M1062.5 63 V65 M1064.5 63 V66 M1066.5 63 V65 M1068.5 63 V67 M1070.5 63 V65 M1072.5 63 V66 M1074.5 63 V65 M1076.5 63 V66 M1078.5 63 V65 M1080.5 63 V67 M1082.5 63 V65 M1084.5 63 V66" stroke="#303030" stroke-width="0.9"/>
<path d="M1069 79.5 C1073 75.5 1083 75 1085.5 81 C1087.5 86.5 1083 90.5 1076.5 91.5" stroke="#3a88d0" stroke-width="3.6" fill="none"/>
<path d="M1062 80.5 L1072.5 75 L1071.5 86 Z" fill="#3a88d0"/>
<!-- chart -->
<rect x="1096.5" y="62.5" width="30" height="29.5" rx="2" fill="url(#gc)" stroke="#7a7a7a" stroke-width="1"/>
<path d="M1101 67.3 H1123 M1101 72.3 H1123 M1101 77.3 H1123 M1101 82.3 H1123" stroke="#d0d0d0" stroke-width="0.8"/>
<path d="M1101.8 65 V87 H1123" stroke="#606060" stroke-width="1" fill="none"/>
<path d="M1102 81.5 C1105 81.5 1106.5 79 1108.5 75.5 C1110.5 72 1115.5 72 1117.5 75.5 C1119.5 79 1121 81.5 1123 81.5" stroke="#c02828" stroke-width="1.1" fill="none"/>
<!-- MAX -->
<rect x="1134.5" y="62.5" width="30" height="29.5" rx="2" fill="url(#gc)" stroke="#7a7a7a" stroke-width="1"/>
<path d="M1139 67.3 H1161 M1139 72.3 H1161 M1139 77.3 H1161 M1139 82.3 H1161" stroke="#d0d0d0" stroke-width="0.8"/>
<path d="M1139.8 65 V87 H1161" stroke="#606060" stroke-width="1" fill="none"/>
<path d="M1140 86.5 C1145 86 1146 67 1150.5 66.5 C1155 67 1156 86 1161 86.5" stroke="#c02828" stroke-width="1" fill="none"/>
<path d="M1150.5 69 V84" stroke="#1020e0" stroke-width="1.2"/>
<path d="M1147.8 71.5 L1150.5 67.5 L1153.2 71.5 Z M1147.8 81.5 L1150.5 85.5 L1153.2 81.5 Z" fill="#1020e0"/>
<text x="1150.5" y="80.5" text-anchor="middle" font-size="7" font-weight="bold" fill="#202020" font-family="Liberation Sans">MAX</text>
<!-- axes gear -->
<rect x="1172.5" y="62.5" width="25" height="21.5" fill="url(#gc)" stroke="#8a8a8a" stroke-width="1"/>
<path d="M1176.5 65 V81.5 H1182" stroke="#808080" stroke-width="0.9" fill="none"/>
<path d="M1175 73.5 H1195 M1185 64.5 V82" stroke="#707070" stroke-width="1"/>
<path d="M1177 71.5 L1174.5 73.5 L1177 75.5 M1193 71.5 L1195.5 73.5 L1193 75.5 M1183 66.5 L1185 64 L1187 66.5 M1183 80 L1185 82.5 L1187 80" stroke="#707070" stroke-width="1" fill="none"/>
<g transform="translate(1195.5 85.5)">
<circle r="4.3" fill="none" stroke="#000" stroke-width="2.4"/>
<path d="M0 -6.5 V6.5 M-6.5 0 H6.5 M-4.6 -4.6 L4.6 4.6 M-4.6 4.6 L4.6 -4.6" stroke="#000" stroke-width="2.2"/>
<circle r="2.2" fill="#f0f0f0"/>
</g>
<!-- row2 chart move -->
<rect x="866.5" y="107.5" width="30" height="29.5" rx="2" fill="url(#gc)" stroke="#707070" stroke-width="1"/>
<path d="M872 112 H893 M872 117 H893 M872 122 H893 M872 127 H893" stroke="#d0d0d0" stroke-width="0.8"/>
<path d="M872.5 110 V131.5 H893" stroke="#606060" stroke-width="1" fill="none"/>
<path d="M873 120 C877 119 879 111 883 111 C887 111 889 119 893.5 121" stroke="#c02828" stroke-width="1" fill="none"/>
<path d="M883 117 V129 M877 123 H889" stroke="#1010e0" stroke-width="1.6"/>
<path d="M880.5 118.5 L883 115.5 L885.5 118.5 Z M880.5 127.5 L883 130.5 L885.5 127.5 Z M878.5 120.5 L875.5 123 L878.5 125.5 Z M887.5 120.5 L890.5 123 L887.5 125.5 Z" fill="#1010e0" stroke="#1010e0" stroke-width="1"/>
<!-- row2 chart shift -->
<rect x="903.5" y="107.5" width="30" height="29.5" rx="2" fill="url(#gc)" stroke="#707070" stroke-width="1"/>
<path d="M909 112 H930 M909 117 H930 M909 122 H930 M909 127 H930" stroke="#d0d0d0" stroke-width="0.8"/>
<path d="M909.5 110 V131.5 H930" stroke="#606060" stroke-width="1" fill="none"/>
<path d="M913 115 C916 112 919 111 922 113 C925 115 927 117 930.5 113" stroke="#c02828" stroke-width="1" fill="none"/>
<path d="M910 128 C913 125 916 123 920 125 C924 127 926 129 930 126" stroke="#505050" stroke-width="1" fill="none"/>
<path d="M920 118 V125" stroke="#1010e0" stroke-width="1.3" stroke-dasharray="1.5 1"/>
<path d="M917.5 119 L920 115 L922.5 119 Z" fill="#1010e0"/>
</svg>
<svg style="left:0;top:0" width="1342" height="172">
<path d="M950.5 108 L955.0 113.5 L959.5 108 M955.0 113.5 V118.5" stroke="#000" stroke-width="2.2" fill="none"/>
<path d="M955.0 124 V136.5 H980.0" stroke="#707070" stroke-width="2.2" fill="none"/>
<path d="M950.0 126 L955.0 120 L960.0 126 Z" fill="#707070"/>
<rect x="962.0" y="124.5" width="18" height="10" rx="2" fill="#1a68c8"/>
<text x="971.0" y="133" text-anchor="middle" font-size="8.5" font-weight="bold" fill="#fff" font-family="Liberation Sans">ALL</text>
<path d="M988.5 108 L993.0 113.5 L997.5 108 M993.0 113.5 V118.5" stroke="#000" stroke-width="2.2" fill="none"/>
<path d="M993.0 124 V136.5 H1018.0" stroke="#707070" stroke-width="2.2" fill="none"/>
<path d="M988.0 126 L993.0 120 L998.0 126 Z" fill="#707070"/>
<rect x="1001.0" y="120" width="15.5" height="14.5" rx="2" fill="#0a9a0a"/>
<text x="1008.8" y="132.5" text-anchor="middle" font-size="12" font-weight="bold" fill="#fff" font-family="Liberation Sans">1</text>
<path d="M1027.5 108 L1032.0 113.5 L1036.5 108 M1032.0 113.5 V118.5" stroke="#000" stroke-width="2.2" fill="none"/>
<path d="M1032.0 124 V136.5 H1057.0" stroke="#707070" stroke-width="2.2" fill="none"/>
<path d="M1027.0 126 L1032.0 120 L1037.0 126 Z" fill="#707070"/>
<rect x="1040.0" y="120" width="15.5" height="14.5" rx="2" fill="#20c8f0"/>
<text x="1047.8" y="132.5" text-anchor="middle" font-size="12" font-weight="bold" fill="#fff" font-family="Liberation Sans">2</text>
<path d="M1065.5 108 L1070.0 113.5 L1074.5 108 M1070.0 113.5 V118.5" stroke="#000" stroke-width="2.2" fill="none"/>
<path d="M1070.0 124 V136.5 H1095.0" stroke="#707070" stroke-width="2.2" fill="none"/>
<path d="M1065.0 126 L1070.0 120 L1075.0 126 Z" fill="#707070"/>
<rect x="1078.0" y="120" width="15.5" height="14.5" rx="2" fill="#f0602a"/>
<text x="1085.8" y="132.5" text-anchor="middle" font-size="12" font-weight="bold" fill="#fff" font-family="Liberation Sans">3</text>
<path d="M1103.5 108 L1108.0 113.5 L1112.5 108 M1108.0 113.5 V118.5" stroke="#000" stroke-width="2.2" fill="none"/>
<path d="M1108.0 124 V136.5 H1133.0" stroke="#707070" stroke-width="2.2" fill="none"/>
<path d="M1103.0 126 L1108.0 120 L1113.0 126 Z" fill="#707070"/>
<rect x="1116.0" y="120" width="15.5" height="14.5" rx="2" fill="#f4a4a4"/>
<text x="1123.8" y="132.5" text-anchor="middle" font-size="12" font-weight="bold" fill="#fff" font-family="Liberation Sans">4</text>
</svg>
<svg style="left:0;top:0" width="1342" height="815">
<path d="M89 361.5 H1256.5" stroke="#000" stroke-width="1"/>
<path d="M89.5 361 V777" stroke="#808000" stroke-width="1"/>
<path d="M1256.5 361 V777" stroke="#1c1c98" stroke-width="1"/>
<path d="M89.5 773.5 H98" stroke="#808000" stroke-width="1"/>
<text x="80.5" y="777.4" text-anchor="end" font-size="10.5" fill="#808000" font-family="Liberation Sans">-10.00</text>
<path d="M89.5 732.5 H98" stroke="#808000" stroke-width="1"/>
<text x="80.5" y="736.1" text-anchor="end" font-size="10.5" fill="#808000" font-family="Liberation Sans">0.00</text>
<path d="M89.5 690.5 H98" stroke="#808000" stroke-width="1"/>
<text x="80.5" y="694.8" text-anchor="end" font-size="10.5" fill="#808000" font-family="Liberation Sans">10.00</text>
<path d="M89.5 649.5 H98" stroke="#808000" stroke-width="1"/>
<text x="80.5" y="653.5" text-anchor="end" font-size="10.5" fill="#808000" font-family="Liberation Sans">20.00</text>
<path d="M89.5 608.5 H98" stroke="#808000" stroke-width="1"/>
<text x="80.5" y="612.2" text-anchor="end" font-size="10.5" fill="#808000" font-family="Liberation Sans">30.00</text>
<path d="M89.5 566.5 H98" stroke="#808000" stroke-width="1"/>
<text x="80.5" y="570.8" text-anchor="end" font-size="10.5" fill="#808000" font-family="Liberation Sans">40.00</text>
<path d="M89.5 525.5 H98" stroke="#808000" stroke-width="1"/>
<text x="80.5" y="529.5" text-anchor="end" font-size="10.5" fill="#808000" font-family="Liberation Sans">50.00</text>
<path d="M89.5 484.5 H98" stroke="#808000" stroke-width="1"/>
<text x="80.5" y="488.2" text-anchor="end" font-size="10.5" fill="#808000" font-family="Liberation Sans">60.00</text>
<path d="M89.5 442.5 H98" stroke="#808000" stroke-width="1"/>
<text x="80.5" y="446.9" text-anchor="end" font-size="10.5" fill="#808000" font-family="Liberation Sans">70.00</text>
<path d="M89.5 401.5 H98" stroke="#808000" stroke-width="1"/>
<text x="80.5" y="405.6" text-anchor="end" font-size="10.5" fill="#808000" font-family="Liberation Sans">80.00</text>
<path d="M1248 389.5 H1256.5" stroke="#1c1c98" stroke-width="1"/>
<text x="1263.5" y="393.6" font-size="10.5" fill="#2a2ab0" font-family="Liberation Sans">0.0</text>
<path d="M1248 444.5 H1256.5" stroke="#1c1c98" stroke-width="1"/>
<text x="1263.5" y="448.3" font-size="10.5" fill="#2a2ab0" font-family="Liberation Sans">-20.0</text>
<path d="M1248 499.5 H1256.5" stroke="#1c1c98" stroke-width="1"/>
<text x="1263.5" y="503.0" font-size="10.5" fill="#2a2ab0" font-family="Liberation Sans">-40.0</text>
<path d="M1248 553.5 H1256.5" stroke="#1c1c98" stroke-width="1"/>
<text x="1263.5" y="557.7" font-size="10.5" fill="#2a2ab0" font-family="Liberation Sans">-60.0</text>
<path d="M1248 608.5 H1256.5" stroke="#1c1c98" stroke-width="1"/>
<text x="1263.5" y="612.4" font-size="10.5" fill="#2a2ab0" font-family="Liberation Sans">-80.0</text>
<path d="M1248 663.5 H1256.5" stroke="#1c1c98" stroke-width="1"/>
<text x="1263.5" y="667.1" font-size="10.5" fill="#2a2ab0" font-family="Liberation Sans">-100.0</text>
<path d="M1248 717.5 H1256.5" stroke="#1c1c98" stroke-width="1"/>
<text x="1263.5" y="721.8" font-size="10.5" fill="#2a2ab0" font-family="Liberation Sans">-120.0</text>
<path d="M1248 772.5 H1256.5" stroke="#1c1c98" stroke-width="1"/>
<text x="1263.5" y="776.5" font-size="10.5" fill="#2a2ab0" font-family="Liberation Sans">-140.0</text>
<path d="M89 777 H1257" stroke="#606060" stroke-width="2"/>
<path d="M125.5 768 V776" stroke="#202020" stroke-width="1"/>
<text x="125.4" y="792.5" text-anchor="middle" font-size="10.5" fill="#303030" font-family="Liberation Sans">50.0</text>
<path d="M228.5 768 V776" stroke="#202020" stroke-width="1"/>
<text x="228.2" y="792.5" text-anchor="middle" font-size="10.5" fill="#303030" font-family="Liberation Sans">100.0</text>
<path d="M331.5 768 V776" stroke="#202020" stroke-width="1"/>
<text x="331.0" y="792.5" text-anchor="middle" font-size="10.5" fill="#303030" font-family="Liberation Sans">150.0</text>
<path d="M433.5 768 V776" stroke="#202020" stroke-width="1"/>
<text x="433.8" y="792.5" text-anchor="middle" font-size="10.5" fill="#303030" font-family="Liberation Sans">200.0</text>
<path d="M536.5 768 V776" stroke="#202020" stroke-width="1"/>
<text x="536.6" y="792.5" text-anchor="middle" font-size="10.5" fill="#303030" font-family="Liberation Sans">250.0</text>
<path d="M639.5 768 V776" stroke="#202020" stroke-width="1"/>
<text x="639.4" y="792.5" text-anchor="middle" font-size="10.5" fill="#303030" font-family="Liberation Sans">300.0</text>
<path d="M742.5 768 V776" stroke="#202020" stroke-width="1"/>
<text x="742.2" y="792.5" text-anchor="middle" font-size="10.5" fill="#303030" font-family="Liberation Sans">350.0</text>
<path d="M845.5 768 V776" stroke="#202020" stroke-width="1"/>
<text x="845.0" y="792.5" text-anchor="middle" font-size="10.5" fill="#303030" font-family="Liberation Sans">400.0</text>
<path d="M947.5 768 V776" stroke="#202020" stroke-width="1"/>
<text x="947.8" y="792.5" text-anchor="middle" font-size="10.5" fill="#303030" font-family="Liberation Sans">450.0</text>
<path d="M1050.5 768 V776" stroke="#202020" stroke-width="1"/>
<text x="1050.6" y="792.5" text-anchor="middle" font-size="10.5" fill="#303030" font-family="Liberation Sans">500.0</text>
<path d="M1153.5 768 V776" stroke="#202020" stroke-width="1"/>
<text x="1153.4" y="792.5" text-anchor="middle" font-size="10.5" fill="#303030" font-family="Liberation Sans">550.0</text>
<path d="M1256.5 768 V776" stroke="#202020" stroke-width="1"/>
<text x="1256.2" y="792.5" text-anchor="middle" font-size="10.5" fill="#303030" font-family="Liberation Sans">600.0</text>
<text x="672" y="805.2" text-anchor="middle" font-size="10.3" fill="#101010" font-family="Liberation Sans">Temp Cel</text>
<text transform="translate(40 568.5) rotate(-90)" text-anchor="middle" font-size="10.2" fill="#808000" font-family="Liberation Sans">DSC mW</text>
<text transform="translate(1313.6 569) rotate(-90)" text-anchor="middle" font-size="10.2" fill="#2a2ab0" font-family="Liberation Sans">TG %</text>
<path d="M88.8 731.7 C89.8 731.3 91.2 730.2 95 729.5 C98.8 728.8 98.1 728.2 111.3 727.7 C124.5 727.2 153.1 727.0 174 726.4 C194.9 725.8 215.7 725.2 236.5 723.9 C257.3 722.6 278.1 720.4 299 718.6 C319.9 716.8 342.5 714.5 361.7 713 C380.9 711.5 399.3 710.4 414.3 709.5 C429.3 708.6 441.3 708.1 451.5 707.6 C461.7 707.1 465.0 706.7 475.4 706.5 C485.8 706.3 505.2 706.2 514.1 706.5 C523.0 706.8 525.0 707.6 529 708 C533.0 708.4 535.4 708.3 538 709 C540.6 709.7 542.5 712.0 544.7 712 C546.9 712.0 545.6 710.9 551.4 709 C557.2 707.1 572.8 702.9 579.7 700.9 C586.6 698.9 583.2 699.7 592.7 696.7 C602.2 693.8 621.4 688.2 636.5 683.2 C651.6 678.2 671.4 670.9 683.4 667 C695.4 663.1 700.7 661.3 708.5 659.7 C716.3 658.1 722.6 657.6 730.4 657.5 C738.2 657.4 745.0 658.0 755.4 658.8 C765.8 659.6 781.5 660.8 793 662.2 C804.5 663.6 816.5 665.8 824.3 667 C832.1 668.2 834.4 668.8 840 669.5 C845.6 670.2 852.4 670.7 857.9 671.3 C863.4 671.9 868.6 673.8 873.1 673.3 C877.6 672.8 881.3 669.3 884.7 668.2 C888.1 667.1 891.0 667.6 893.7 666.8 C896.4 666.0 898.8 663.7 900.8 663.4 C902.8 663.1 905.1 664.7 906 665" stroke="#808000" stroke-width="5.9" fill="none" stroke-linecap="round" stroke-linejoin="round"/>
<path d="M906 665 C909.9 666.2 920.4 669.2 929.4 672.2 C938.4 675.2 951.8 680.4 959.9 683 C968.0 685.6 971.0 686.7 977.7 688 C984.4 689.3 991.5 690.1 1000 690.8 C1008.5 691.5 1017.6 692.2 1028.5 692 C1039.4 691.8 1053.5 691.2 1065.5 689.7 C1077.5 688.2 1091.5 684.5 1100.2 682.7 C1109.0 680.9 1113.0 679.8 1118 679 C1123.0 678.2 1126.5 677.6 1130.2 677.7 C1133.9 677.8 1136.3 678.4 1140 679.6 C1143.7 680.9 1148.8 683.2 1152.3 685.2 C1155.8 687.2 1157.8 688.5 1160.9 691.3 C1164.0 694.0 1167.4 698.4 1170.7 701.7 C1174.0 705.0 1177.5 708.4 1180.5 710.9 C1183.5 713.4 1185.5 715.0 1189 717 C1192.5 719.0 1197.2 721.0 1201.3 723.2 C1205.4 725.4 1209.5 727.6 1213.6 730 C1217.7 732.4 1221.8 735.0 1225.9 737.3 C1230.0 739.6 1233.2 742.1 1238.2 744 C1243.2 745.9 1253.0 747.8 1256 748.5" stroke="#808000" stroke-width="2.6" fill="none" stroke-linejoin="round"/>
<path d="M88 390 C170.0 389.9 490.7 389.6 580 389.7 C669.3 389.8 610.9 390.0 624 390.3 C637.1 390.6 646.8 390.9 658.5 391.5 C670.2 392.1 681.8 392.5 694 394 C706.2 395.5 719.3 397.6 732 400.4 C744.7 403.1 757.3 406.3 770 410.5 C782.7 414.7 797.4 420.8 808 425.7 C818.6 430.6 826.4 435.5 833.4 439.7 C840.4 443.9 845.4 447.6 850 451 C854.6 454.4 856.6 455.4 861 460 C865.4 464.6 871.7 471.9 876.5 478.7 C881.3 485.5 885.2 492.9 889.8 500.8 C894.4 508.7 901.7 522.0 904.1 526.2" stroke="#0000ff" stroke-width="5" fill="none" stroke-linecap="round" stroke-linejoin="round"/>
<path d="M904.1 526.2 C906.1 530.2 911.9 541.0 916.3 550.5 C920.7 560.0 926.8 575.6 930.3 582.9 C933.8 590.1 934.9 590.7 937.2 594 C939.5 597.3 941.1 599.7 944 602.6 C946.9 605.5 951.2 609.0 954.4 611.2 C957.6 613.4 959.4 614.6 963 616 C966.6 617.4 971.5 618.8 975.8 619.8 C980.1 620.8 984.4 621.4 988.7 622 C993.0 622.6 996.6 623.2 1001.6 623.7 C1006.6 624.2 1010.7 624.2 1018.8 624.8 C1026.9 625.4 1040.1 626.5 1050 627.5 C1059.9 628.5 1066.4 628.9 1078.2 630.8 C1090.0 632.7 1106.6 635.5 1120.7 638.7 C1134.8 641.9 1152.3 647.1 1163 650 C1173.7 652.9 1177.0 654.2 1185 656 C1193.0 657.8 1203.5 659.6 1211 660.6 C1218.5 661.6 1222.5 661.6 1230 662 C1237.5 662.4 1251.7 662.7 1256 662.8" stroke="#0000ff" stroke-width="2.3" fill="none" stroke-linejoin="round"/>
</svg>
<div class="a" style="left:1340px;top:811px;width:2px;height:4px;background:#000"></div>

</div>
</body></html>
